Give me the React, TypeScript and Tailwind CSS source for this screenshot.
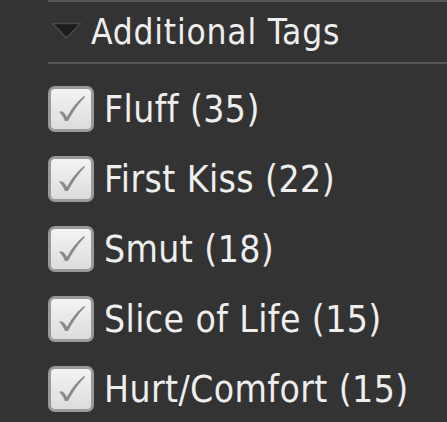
const tags = [
  { name: "Fluff", count: 35 },
  { name: "First Kiss", count: 22 },
  { name: "Smut", count: 18 },
  { name: "Slice of Life", count: 15 },
  { name: "Hurt/Comfort", count: 15 },
];

function Check() {
  return (
    <span className="flex h-[46px] w-[46px] shrink-0 items-center justify-center rounded-[7px] border-[3px] border-[#9a9a9a] bg-gradient-to-b from-[#f4f4f4] to-[#dcdcdc]">
      <svg width="32" height="32" viewBox="0 0 32 32">
        <path
          d="M4 19 Q7 17 10 21 L12 24 Q18 12 29 3 L30 4 Q21 13 13 28 L10 28 Q7 21 4 19 Z"
          fill="#8a8a8a"
        />
      </svg>
    </span>
  );
}

export default function App() {
  return (
    <div className="h-[422px] w-[447px] overflow-hidden bg-[#333333] pl-[48px] font-['DejaVu_Sans_Condensed','DejaVu_Sans',sans-serif] text-[#eeeeee]">
      <div className="flex h-[64px] items-center gap-[9px] border-y-2 border-[#575757] pl-[3px]">
        <svg width="31" height="18" viewBox="0 0 31 18" className="mt-[-3px]">
          <path d="M1.5 1.5 L29.5 1.5 L15.5 16 Z" fill="#1c1c1c" stroke="#4a4a4a" strokeWidth="1.5" strokeLinejoin="round" />
        </svg>
        <span className="text-[35px] leading-none tracking-[0.8px]">Additional Tags</span>
      </div>
      <ul className="mt-[22px] flex flex-col gap-[24px]">
        {tags.map((t) => (
          <li key={t.name} className="flex items-center gap-[10px]">
            <Check />
            <span className="text-[37px] leading-none tracking-[0.4px]">
              {t.name} ({t.count})
            </span>
          </li>
        ))}
      </ul>
    </div>
  );
}
